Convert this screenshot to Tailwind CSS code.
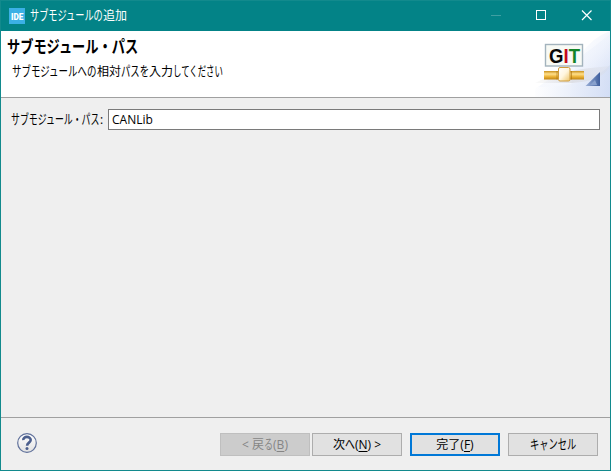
<!DOCTYPE html>
<html lang="ja">
<head>
<meta charset="utf-8">
<title>サブモジュールの追加</title>
<script src="https://cdn.jsdelivr.net/npm/@tailwindcss/browser@4"></script>
</head>
<body class="overflow-hidden">
<div class="w-[611px] h-[471px] flex flex-col bg-[#efefef] border border-[#128a8d] text-black text-[12px] leading-[16px] whitespace-nowrap font-['Open_Sans','Noto_Sans_CJK_JP',sans-serif]">
  <header class="h-[30px] shrink-0 bg-[#038387] text-white flex items-center pl-2">
    <svg class="w-4 h-4 mr-[5px]" viewBox="0 0 16 16"><rect width="16" height="16" fill="#3bb0e5"/><text x="2" y="11.5" textLength="12.5" lengthAdjust="spacingAndGlyphs" fill="#fff" font-family="Roboto, sans-serif" font-weight="900" font-size="9.5">IDE</text></svg>
    <h1 class="flex h-4 w-[100px]"><span class="w-[73px]"><span class="inline-block origin-left scale-x-[.765] scale-y-[1.12]">サブモジュールの</span></span><span>追加</span></h1>
    <svg class="ml-auto w-[120px] h-[30px]" viewBox="490 1 120 30" fill="none" shape-rendering="crispEdges"><path d="M491 15.5h10" stroke="#3f9fa2"/><path d="M536.5 10.5h9v9h-9z" stroke="#fff"/><path d="M582 10.5l9.5 9.5M591.500 10.5l-9.500 9.500" stroke="#fff" stroke-width="1.200" shape-rendering="auto"/></svg>
  </header>
  <section class="h-[67px] shrink-0 bg-white border-b border-[#a0a0a0] flex justify-between">
    <div class="pt-[6px] pl-[6px]">
      <h2 class="text-[16px] leading-[20px] font-bold w-[132px]"><span class="inline-block origin-left scale-x-[.825] scale-y-[1.06]">サブモジュール・パス</span></h2>
      <p class="flex mt-[7px] pl-[5px]"><span class="w-[85px]"><span class="inline-block origin-left scale-x-[.787] scale-y-[1.12]">サブモジュールへの</span></span><span class="w-6">相対</span><span class="w-7"><span class="inline-block origin-left scale-x-[.78] scale-y-[1.12]">パスを</span></span><span class="w-6">入力</span><span class="w-[50px]"><span class="inline-block origin-left scale-x-[.7] scale-y-[1.12]">してください</span></span></p>
    </div>
    <svg class="w-[75px] h-[66px]" viewBox="535 31 75 66">
      <defs>
        <linearGradient id="sky" x1="0" y1="0" x2="1" y2="1"><stop offset=".1" stop-color="#fff"/><stop offset=".55" stop-color="#e8eefb"/><stop offset="1" stop-color="#bfcdf0"/></linearGradient>
        <linearGradient id="low" x1="0" x2="1"><stop offset="0" stop-color="#fff"/><stop offset="1" stop-color="#d3def5"/></linearGradient>
        <linearGradient id="pipe" x1="0" x2="0" y1="0" y2="1"><stop offset="0" stop-color="#c9901c"/><stop offset=".35" stop-color="#ffe08c"/><stop offset=".65" stop-color="#edb53a"/><stop offset="1" stop-color="#c08412"/></linearGradient>
        <linearGradient id="box" x1="0" y1="0" x2="1" y2="1"><stop offset="0" stop-color="#fff"/><stop offset=".5" stop-color="#fff6de"/><stop offset="1" stop-color="#edc467"/></linearGradient>
        <linearGradient id="tri" x1="0" x2="1"><stop offset="0" stop-color="#9db2d9"/><stop offset="1" stop-color="#405f9d"/></linearGradient>
        <linearGradient id="shade" x1="0" x2="1"><stop offset="0" stop-color="#ddd" stop-opacity=".25"/><stop offset=".5" stop-color="#d4d4d8"/><stop offset="1" stop-color="#d9dce5" stop-opacity=".5"/></linearGradient>
      </defs>
      <path d="M570 97Q572 45 610 31V97z" fill="url(#sky)" opacity=".55"/>
      <path d="M535 97V89Q575 62 610 34V97z" fill="url(#sky)" opacity=".45"/>
      <path d="M535 97V87Q590 87 610 65V97z" fill="url(#low)" opacity=".8"/>
      <path d="M535 83Q559 70 610 66Q603 81 572 83z" fill="url(#shade)" opacity=".6"/>
      <rect x="545.500" y="44.500" width="37" height="21.500" fill="#f8faf5" stroke="#a3b3bd" stroke-width="1.400"/>
      <text x="549" y="62.500" textLength="31" lengthAdjust="spacingAndGlyphs" font-family="Liberation Sans, sans-serif" font-weight="700" font-size="20" fill="#080808">G<tspan fill="#c40c20">I</tspan><tspan fill="#138427">T</tspan></text>
      <rect x="544" y="71" width="40" height="8.500" fill="url(#pipe)"/>
      <path d="M557 71v8.500M571.500 71v8.500" stroke="#a8700c" stroke-opacity=".6"/>
      <rect x="558.500" y="67.500" width="11.500" height="13.500" rx="1.500" fill="url(#box)" stroke="#cf9c3c"/>
      <path d="M600 72v14H585.500z" fill="url(#tri)"/><path d="M590 85l5-5 2 5z" fill="#89a1cd"/>
    </svg>
  </section>
  <main class="h-[320px] shrink-0 flex items-start pt-[11px] pl-[10px] pr-[10px] border-b border-[#a0a0a0]">
    <label class="w-[97px] mt-[3px] flex"><span class="w-[89px]"><span class="inline-block origin-left scale-x-[.742] scale-y-[1.12]">サブモジュール・パス</span></span>:</label>
    <div class="flex-1 h-[21px] border border-[#7a7a7a] bg-white pl-[3px] leading-[20px]">CANLib</div>
  </main>
  <footer class="flex-1 flex items-start pt-[15px] pl-4 pr-3">
    <svg class="w-5 h-5" viewBox="0 0 20 20"><defs><linearGradient id="help" x2="0" y2="1"><stop stop-color="#fff"/><stop offset="1" stop-color="#e2e2e2"/></linearGradient></defs><circle cx="10" cy="10" r="9.300" fill="url(#help)" stroke="#60719b" stroke-width="1.200"/><path d="M6.300 7.200C6 2.800 13.700 2.900 13.700 7c0 2.600-3.600 2.700-3.600 5.700" fill="none" stroke="#4c5f8d" stroke-width="2.600"/><circle cx="10" cy="15.500" r="1.500" fill="#4c5f8d"/></svg>
    <div class="ml-auto flex">
      <button class="w-[90px] h-[23px] border border-[#bfbfbf] bg-[#cccccc] text-[#858585] flex items-center justify-center"><span>&lt; 戻</span><span class="w-[9px]"><span class="inline-block origin-left scale-x-[.76] scale-y-[1.12]">る</span></span><span>(<u class="underline-offset-2">B</u>)</span></button>
      <button class="ml-[2px] w-[90px] h-[23px] border border-[#adadad] bg-[#e1e1e1] flex items-center justify-center"><span>次</span><span class="w-[10px]"><span class="inline-block origin-left scale-x-[.83] scale-y-[1.12]">へ</span></span><span>(<u class="underline-offset-2">N</u>) &gt;</span></button>
      <button class="ml-2 w-[90px] h-[23px] border-2 border-[#0078d7] bg-[#e1e1e1] flex items-center justify-center"><span>完了(<u class="underline-offset-2">F</u>)</span></button>
      <button class="ml-2 w-[90px] h-[23px] border border-[#adadad] bg-[#e1e1e1] flex items-center justify-center"><span class="w-[46px] text-left"><span class="inline-block origin-left scale-x-[.77] scale-y-[1.12]">キャンセル</span></span></button>
    </div>
  </footer>
</div>
</body>
</html>
